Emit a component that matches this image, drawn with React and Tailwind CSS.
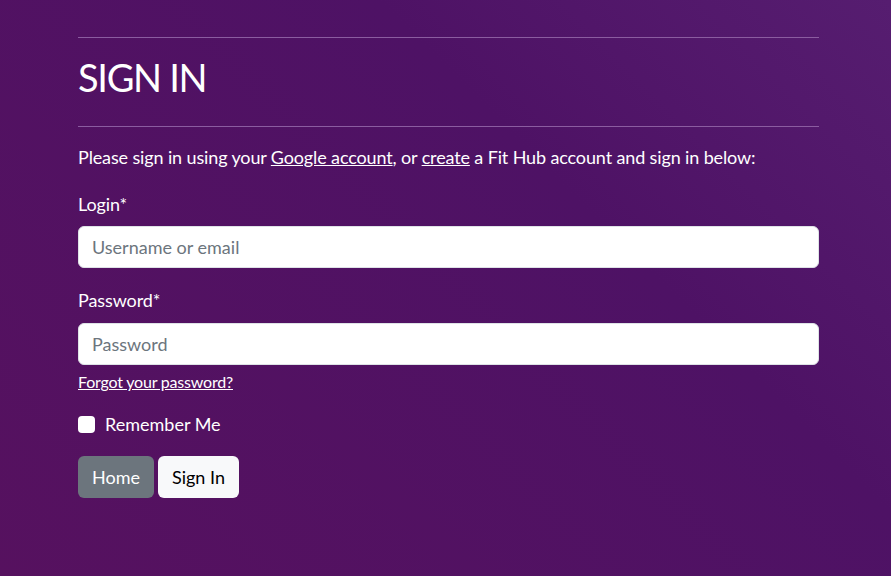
export default function App() {
  return (
    <div className="min-h-[576px] w-full bg-[linear-gradient(225deg,#561d70_0%,#4e1265_35%,#56115f_100%)] font-['Lato','Open_Sans',sans-serif] text-white">
      <div className="ml-[78px] w-[741px] pt-[37px]">
        <hr className="border-0 border-t border-[#8b5ca0]" />
        <h1 className="mt-[15px] text-[38px] font-normal leading-[48px] tracking-[-1.3px]">SIGN IN</h1>
        <hr className="mt-[25px] border-0 border-t border-[#8b5ca0]" />
        <p className="mt-[17px] text-[18px] leading-[27px] tracking-[-0.13px]">
          Please sign in using your <a href="#" className="underline">Google account</a>, or{' '}
          <a href="#" className="underline">create</a> a Fit Hub account and sign in below:
        </p>
        <form className="mt-[20px]">
          <label className="block text-[18px] leading-[27px] tracking-[-0.1px]">Login*</label>
          <input
            type="text"
            placeholder="Username or email"
            className="mt-[8px] block h-[42px] w-full rounded-[6px] border border-[#dee2e6] bg-white px-[13px] text-[18px] text-[#212529] placeholder:text-[#6c757d] outline-none"
          />
          <label className="mt-[19px] block text-[18px] leading-[27px] tracking-[-0.1px]">Password*</label>
          <input
            type="password"
            placeholder="Password"
            className="mt-[9px] block h-[42px] w-full rounded-[6px] border border-[#dee2e6] bg-white px-[13px] text-[18px] text-[#212529] placeholder:text-[#6c757d] outline-none"
          />
          <a href="#" className="mt-[6px] block text-[16px] leading-[22px] tracking-[-0.2px] underline">Forgot your password?</a>
          <div className="mt-[18px] flex items-center gap-[10px]">
            <span className="block h-[17px] w-[17px] rounded-[4px] bg-white" />
            <span className="text-[18px] leading-[27px]">Remember Me</span>
          </div>
          <div className="mt-[18px] flex gap-[4px]">
            <button type="button" className="h-[42px] rounded-[6px] bg-[#6c757d] px-[14px] text-[18px] text-white">Home</button>
            <button type="button" className="h-[42px] rounded-[6px] bg-[#f8f9fa] px-[14px] text-[18px] text-black">Sign In</button>
          </div>
        </form>
      </div>
    </div>
  );
}
